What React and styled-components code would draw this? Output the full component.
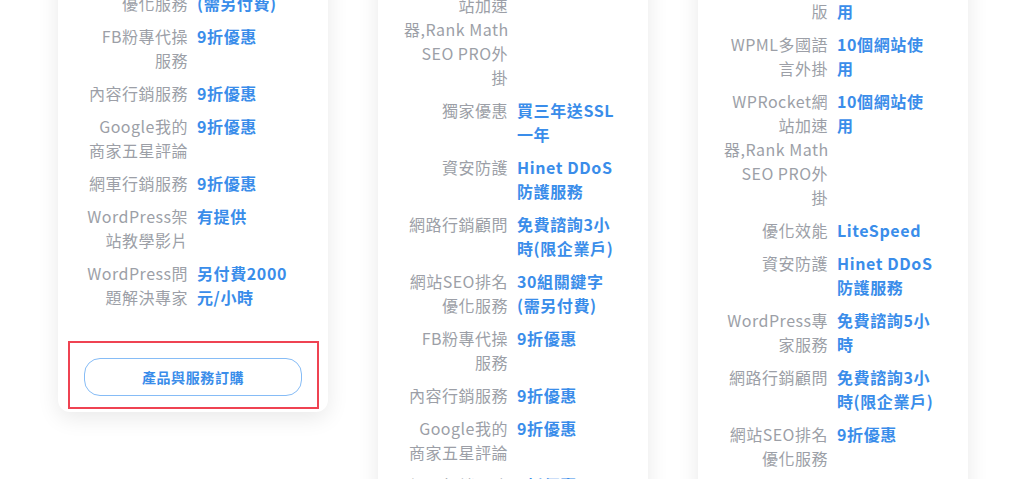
import React from "react"
import styled, { createGlobalStyle } from "styled-components"

const GlobalStyle = createGlobalStyle`
  html, body {
    margin: 0;
    padding: 0;
    background: #fff;
    overflow: hidden;
  }
  body {
    font-family: "Noto Sans CJK TC", "Noto Sans", sans-serif;
  }
`

const PLANS = [
  {
    shift: 53,
    button: true,
    rows: [
      ["網站SEO排名\n優化服務", "30組關鍵字\n(需另付費)"],
      ["FB粉專代操\n服務", "9折優惠"],
      ["內容行銷服務", "9折優惠"],
      ["Google我的\n商家五星評論", "9折優惠"],
      ["網軍行銷服務", "9折優惠"],
      ["WordPress架\n站教學影片", "有提供"],
      ["WordPress問\n題解決專家", "另付費2000\n元/小時"],
    ],
  },
  {
    shift: 51,
    rows: [
      ["WPRocket網\n站加速\n器,Rank Math\nSEO PRO外\n掛", "有提供"],
      ["獨家優惠", "買三年送SSL\n一年"],
      ["資安防護", "Hinet DDoS\n防護服務"],
      ["網路行銷顧問", "免費諮詢3小\n時(限企業戶)"],
      ["網站SEO排名\n優化服務", "30組關鍵字\n(需另付費)"],
      ["FB粉專代操\n服務", "9折優惠"],
      ["內容行銷服務", "9折優惠"],
      ["Google我的\n商家五星評論", "9折優惠"],
      ["網軍行銷服務", "9折優惠"],
      ["WordPress架\n站教學影片", "有提供"],
    ],
  },
  {
    shift: 45,
    rows: [
      ["Elementor\n版", "10個網站使\n用"],
      ["WPML多國語\n言外掛", "10個網站使\n用"],
      ["WPRocket網\n站加速\n器,Rank Math\nSEO PRO外\n掛", "10個網站使\n用"],
      ["優化效能", "LiteSpeed"],
      ["資安防護", "Hinet DDoS\n防護服務"],
      ["WordPress專\n家服務", "免費諮詢5小\n時"],
      ["網路行銷顧問", "免費諮詢3小\n時(限企業戶)"],
      ["網站SEO排名\n優化服務", "9折優惠"],
      ["FB粉專代操\n服務", "9折優惠"],
      ["內容行銷服務", "9折優惠"],
    ],
  },
]

const Page = styled.div`
  height: 479px;
  overflow: hidden;
  padding-left: 58px;
  display: grid;
  grid-template-columns: repeat(3, 270px);
  column-gap: 50px;
  align-items: start;
`

const Card = styled.div`
  margin-top: ${p => -p.$shift}px;
  background: #fff;
  border-radius: 12px;
  box-shadow: 0 6px 22px rgba(0, 0, 0, 0.09);
  padding: 20px 26px 16px;
  display: flex;
  flex-direction: column;
`

const Rows = styled.div`
  display: flex;
  flex-direction: column;
  gap: 9px;
`

const Row = styled.div`
  display: grid;
  grid-template-columns: 104px 1fr;
  column-gap: 9px;
  font-size: 16px;
  line-height: 24px;
`

const Label = styled.div`
  text-align: right;
  color: #9c9fa7;
  letter-spacing: 0.5px;
  white-space: pre;
`

const Value = styled.div`
  color: #3a8dea;
  font-weight: 700;
  letter-spacing: 0.6px;
  white-space: pre;
`

const ButtonArea = styled.div`
  position: relative;
  margin-top: 49px;
`

const OrderButton = styled.button`
  display: block;
  width: 100%;
  height: 38px;
  border: 1px solid #86bcf6;
  border-radius: 16px;
  background: #fff;
  color: #3a8dea;
  font-family: inherit;
  font-size: 14px;
  font-weight: 700;
  letter-spacing: 0.6px;
  cursor: pointer;
`

const Highlight = styled.div`
  position: absolute;
  top: -17px;
  bottom: -13px;
  left: -16px;
  right: -17px;
  border: 2px solid #ef4352;
  pointer-events: none;
`

function PlanCard({ plan }) {
  return (
    <Card $shift={plan.shift}>
      <Rows>
        {plan.rows.map(([label, value], i) => (
          <Row key={i}>
            <Label>{label}</Label>
            <Value>{value}</Value>
          </Row>
        ))}
      </Rows>
      {plan.button && (
        <ButtonArea>
          <OrderButton type="button">產品與服務訂購</OrderButton>
          <Highlight />
        </ButtonArea>
      )}
    </Card>
  )
}

export default function App() {
  return (
    <>
      <GlobalStyle />
      <Page>
        {PLANS.map((plan, i) => (
          <PlanCard key={i} plan={plan} />
        ))}
      </Page>
    </>
  )
}
